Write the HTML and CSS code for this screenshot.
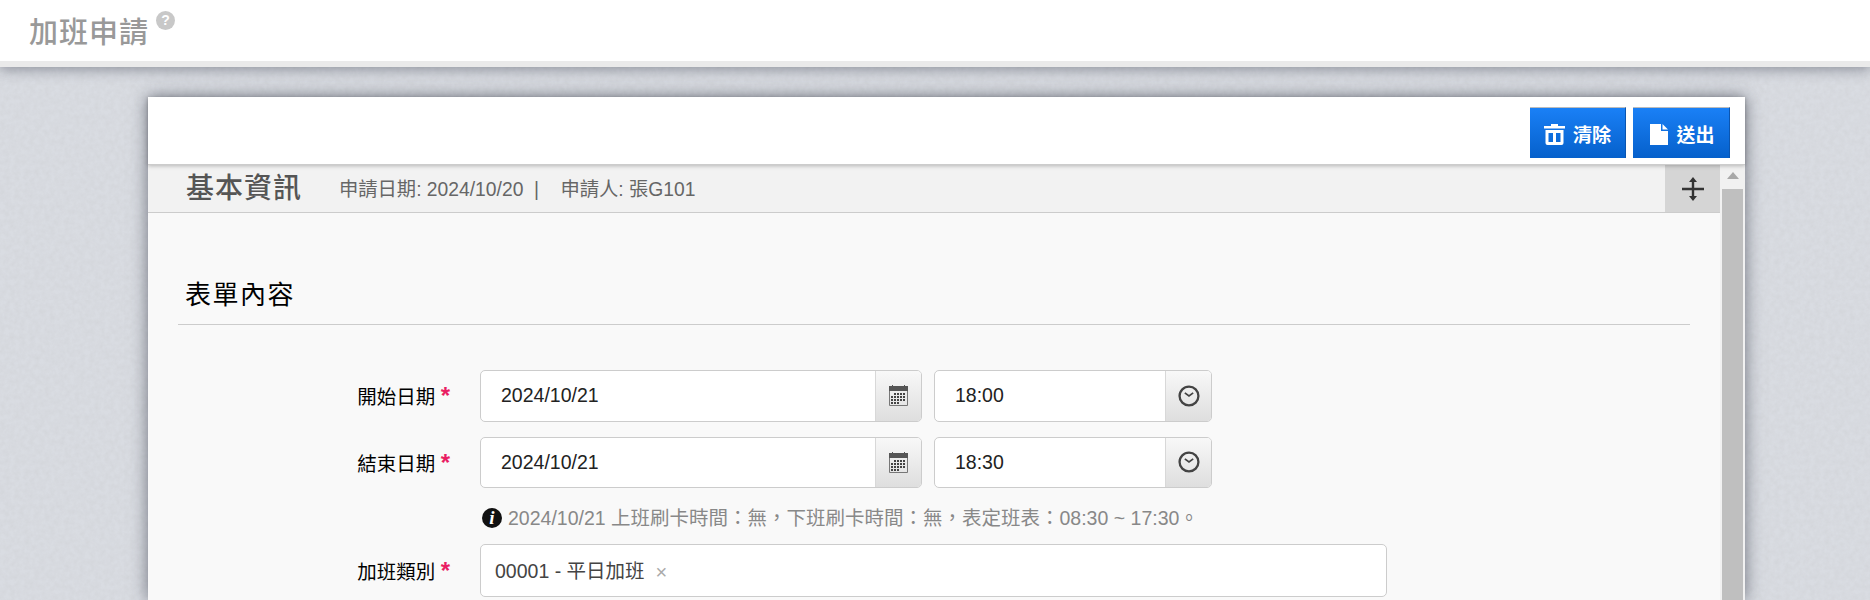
FILE: index.html
```html
<!DOCTYPE html>
<html lang="zh-Hant">
<head>
    <meta charset="UTF-8">
    <meta name="viewport" content="width=device-width, initial-scale=1.0">
    <title>加班申請</title>
    <link rel="stylesheet" href="styles.css">
</head>
<body>
    <header class="page-header">
        <h1>加班申請</h1>
        <span class="help-icon">?</span>
    </header>

    <div class="panel">
        <div class="toolbar">
            <button class="btn">
                <svg class="btn-icon" width="21" height="21" viewBox="0 0 21 21">
                    <path fill="#fff" fill-rule="evenodd" d="M7 0h7v2h7v2.500H0V2h7zM1.500 6h18v13a2 2 0 0 1-2 2h-14a2 2 0 0 1-2-2zm3 3v9h4.500V9zm7.500 0v9h4.500V9z"/>
                </svg>
                清除
            </button>
            <button class="btn btn-send">
                <svg class="btn-icon" width="18" height="21" viewBox="0 0 18 21">
                    <path fill="#fff" d="M0 0h11v7h7v14H0zM12.500 0L18 5.500h-5.500z"/>
                </svg>
                送出
            </button>
        </div>

        <div class="panel-body">
            <div class="content">
                <div class="info-bar">
                    <h2>基本資訊</h2>
                    <span class="meta">申請日期: 2024/10/20 &nbsp;|&nbsp; &nbsp; 申請人: 張G101</span>
                    <button class="expand-btn">
                        <svg width="22" height="24" viewBox="0 0 22 24">
                            <path stroke="#333" stroke-width="2.400" d="M0 12h22M11 4v16"/>
                            <path fill="#333" d="M11 0l4 5H7zM11 24l-4-5h8z"/>
                        </svg>
                    </button>
                </div>

                <div class="form-area">
                    <h3 class="form-title">表單內容</h3>

                    <div class="form-row">
                        <label>開始日期 <em>*</em></label>
                        <div class="input-group date-group">
                            <span class="value">2024/10/21</span>
                            <span class="addon">
                                <svg width="19" height="21" viewBox="0 0 19 21">
                                    <use href="#icon-calendar"/>
                                </svg>
                            </span>
                        </div>
                        <div class="input-group time-group">
                            <span class="value">18:00</span>
                            <span class="addon">
                                <svg width="22" height="22" viewBox="0 0 21 21">
                                    <use href="#icon-clock"/>
                                </svg>
                            </span>
                        </div>
                    </div>

                    <div class="form-row">
                        <label>結束日期 <em>*</em></label>
                        <div class="input-group date-group">
                            <span class="value">2024/10/21</span>
                            <span class="addon">
                                <svg width="19" height="21" viewBox="0 0 19 21">
                                    <use href="#icon-calendar"/>
                                </svg>
                            </span>
                        </div>
                        <div class="input-group time-group">
                            <span class="value">18:30</span>
                            <span class="addon">
                                <svg width="22" height="22" viewBox="0 0 21 21">
                                    <use href="#icon-clock"/>
                                </svg>
                            </span>
                        </div>
                    </div>

                    <p class="hint"><span class="info-icon">i</span>2024/10/21 上班刷卡時間：無，下班刷卡時間：無，表定班表：08:30 ~ 17:30。</p>

                    <div class="form-row">
                        <label>加班類別 <em>*</em></label>
                        <div class="select-box">
                            <span class="selected">00001 - 平日加班</span>
                            <span class="remove">×</span>
                        </div>
                    </div>
                </div>
            </div>

            <div class="scrollbar">
                <span class="scroll-up"></span>
                <span class="scroll-thumb"></span>
            </div>
        </div>
    </div>

    <svg class="icon-defs" width="0" height="0">
        <defs>
            <g id="icon-calendar">
                <path fill="#555" d="M0 1h3V0h1v1h11V0h1v1h3v5H0z"/>
                <path fill="none" stroke="#777" d="M.5 6v14.500h18V6"/>
                <path fill="#444" d="M5 8h2v2H5zM8 8h2v2H8zM11 8h2v2h-2zM14 8h2v2h-2zM2 11h2v2H2zM5 11h2v2H5zM8 11h2v2H8zM11 11h2v2h-2zM14 11h2v2h-2zM2 14h2v2H2zM5 14h2v2H5zM8 14h2v2H8zM11 14h2v2h-2zM14 14h2v2h-2zM2 17h2v2H2zM5 17h2v2H5zM8 17h2v2H8z"/>
            </g>
            <g id="icon-clock">
                <circle cx="10.500" cy="10.500" r="9" fill="none" stroke="#444" stroke-width="2.200"/>
                <path fill="none" stroke="#444" stroke-width="1.600" d="M6.500 7.500l4 3 4-3"/>
            </g>
        </defs>
    </svg>
</body>
</html>
```

FILE: styles.css
```css
* {
    box-sizing: border-box;
}
html, body {
    height: 600px;
    overflow: hidden;
}
body {
    margin: 0;
    background-color: #d9dce2;
    background-image: url("data:image/svg+xml,%3Csvg xmlns='http://www.w3.org/2000/svg' width='300' height='300'%3E%3Cfilter id='n'%3E%3CfeTurbulence type='fractalNoise' baseFrequency='0.2' numOctaves='2' stitchTiles='stitch'/%3E%3CfeColorMatrix values='0 0 0 0 0.5 0 0 0 0 0.5 0 0 0 0 0.5 0 0 0 0.3 -0.08'/%3E%3C/filter%3E%3Crect width='300' height='300' filter='url(%23n)'/%3E%3C/svg%3E");
    font-family: "Liberation Sans", "Noto Sans CJK TC", sans-serif;
    font-size: 19.500px;
}
.page-header {
    display: flex;
    align-items: flex-start;
    height: 67px;
    padding: 16px 0 0 29px;
    background-color: #fff;
    border-bottom: 6px solid #eaeaea;
    box-shadow: 0 3px 12px rgba(60,65,80,0.45);
}
.page-header h1 {
    margin: 0;
    font-size: 29px;
    font-weight: 500;
    line-height: 34px;
    letter-spacing: 1px;
    color: #999;
}
.help-icon {
    width: 19px;
    height: 19px;
    margin: -5px 0 0 7px;
    border-radius: 50%;
    background-color: #c8c8c8;
    color: #fff;
    font-size: 14px;
    font-weight: bold;
    line-height: 19px;
    text-align: center;
}
.panel {
    height: 503px;
    margin: 30px 125px 0 148px;
    background-color: #f9f9f9;
    box-shadow: 0 0 16px rgba(40,45,60,0.6);
}
.toolbar {
    position: relative;
    display: flex;
    justify-content: flex-end;
    gap: 7px;
    height: 68px;
    padding: 10px 15px 0 0;
    background-color: #fff;
    border-bottom: 1px solid #ccc;
    box-shadow: 0 1px 4px rgba(0,0,0,0.25);
}
.btn {
    display: flex;
    align-items: center;
    justify-content: center;
    gap: 8px;
    width: 96px;
    height: 51px;
    padding: 0;
    border: none;
    border-top: 1px solid #bbb;
    border-right: 1px solid #0a55b0;
    background: linear-gradient(#1a80f6, #0560cb);
    color: #fff;
    font-family: inherit;
    font-size: 19px;
    font-weight: bold;
}
.btn-send {
    width: 97px;
    padding-left: 3px;
}
.btn-icon {
    margin-top: 3px;
}
.panel-body {
    display: flex;
    height: 435px;
}
.content {
    flex: 1;
}
.info-bar {
    display: flex;
    align-items: center;
    height: 48px;
    padding: 0 0 0 38px;
    background-color: #f2f2f2;
    border-bottom: 1px solid #ccc;
}
.info-bar h2 {
    margin: -5px 37px 0 0;
    font-size: 28px;
    font-weight: 500;
    letter-spacing: 1px;
    color: #555;
}
.meta {
    flex: 1;
    margin-top: -2px;
    color: #666;
    font-size: 19.300px;
}
.expand-btn {
    display: flex;
    align-items: center;
    justify-content: center;
    width: 55px;
    height: 47px;
    padding: 0;
    border: none;
    background-color: #d5d5d5;
}
.form-area {
    padding: 66px 30px 0;
}
.form-title {
    height: 46px;
    margin: 0 0 45px;
    padding-left: 7px;
    border-bottom: 1px solid #ccc;
    font-size: 26px;
    font-weight: 400;
    line-height: 33px;
    letter-spacing: 1.500px;
    color: #000;
}
.form-row {
    display: flex;
    align-items: center;
    margin-bottom: 15px;
}
.form-row label {
    flex: none;
    width: 272px;
    margin-right: 30px;
    text-align: right;
    color: #000;
}
.form-row em {
    font-style: normal;
    font-size: 24px;
    font-weight: bold;
    line-height: 18px;
    color: #e91e63;
}
.input-group {
    display: flex;
    height: 51.500px;
    overflow: hidden;
    background-color: #fff;
    border: 1px solid #ccc;
    border-radius: 5px;
}
.date-group {
    width: 442px;
    margin-right: 12px;
}
.time-group {
    width: 278px;
}
.value {
    flex: 1;
    padding-left: 20px;
    line-height: 48px;
    color: #222;
}
.addon {
    display: flex;
    align-items: center;
    justify-content: center;
    width: 46px;
    background: linear-gradient(#f8f8f8, #dedede);
    border-left: 1px solid #d8d8d8;
}
.hint {
    display: flex;
    align-items: center;
    height: 28px;
    margin: -1px 0 14px 302px;
    color: #888;
}
.info-icon {
    width: 20px;
    height: 20px;
    margin: 4px 6px 0 2px;
    border-radius: 50%;
    background-color: #111;
    color: #fff;
    font-family: "Liberation Serif", serif;
    font-size: 19px;
    font-style: italic;
    font-weight: bold;
    line-height: 20px;
    text-align: center;
}
.select-box {
    display: flex;
    align-items: center;
    width: 907px;
    height: 53px;
    padding-left: 14px;
    background-color: #fff;
    border: 1px solid #ccc;
    border-radius: 5px;
}
.selected {
    margin-top: -3px;
    color: #444;
}
.remove {
    margin: 3px 0 0 11px;
    color: #aaa;
    font-size: 20px;
}
.scrollbar {
    flex: none;
    display: flex;
    flex-direction: column;
    align-items: center;
    width: 25px;
    padding-top: 7px;
    background-color: #f1f1f1;
}
.scroll-up {
    width: 0;
    height: 0;
    border-left: 6px solid transparent;
    border-right: 6px solid transparent;
    border-bottom: 7px solid #a8a8a8;
}
.scroll-thumb {
    flex: 1;
    width: 21px;
    margin-top: 10px;
    background-color: #bfbfbf;
}
.icon-defs {
    position: absolute;
}
```
